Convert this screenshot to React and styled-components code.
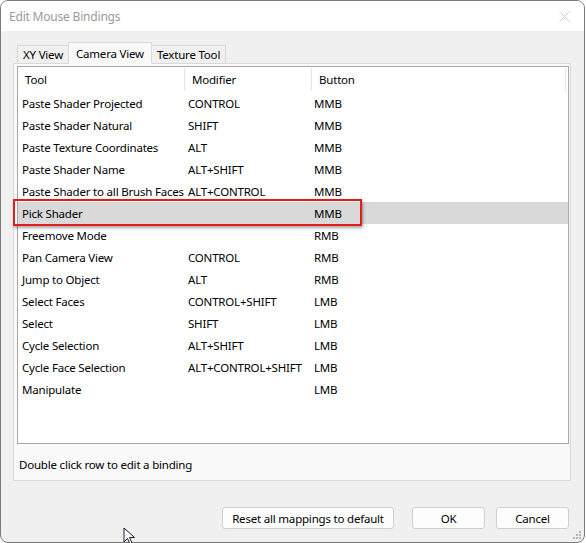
import React from 'react'
import styled, { createGlobalStyle } from 'styled-components'

const GlobalStyle = createGlobalStyle`
  html, body {
    margin: 0;
    padding: 0;
    background: #ffffff;
  }
  body {
    font-family: "Noto Sans", "Open Sans", sans-serif;
    font-size: 11.5px;
    letter-spacing: -0.2px;
    color: #000;
  }
`;

const Window = styled.div`
  position: relative;
  width: 585px;
  height: 543px;
  box-sizing: border-box;
  border: 1px solid #7a7a7a;
  border-radius: 8px;
  overflow: hidden;
  display: flex;
  flex-direction: column;
  background: #f0f0f0;
`;

const TitleBar = styled.div`
  height: 30px;
  flex-shrink: 0;
  background: #ffffff;
  display: flex;
  align-items: center;
  justify-content: space-between;
  padding: 0 8px;
`;

const Title = styled.span`
  color: #9b9b9b;
  font-size: 12px;
`;

const CloseBtn = styled.div`
  width: 20px;
  height: 20px;
  display: flex;
  align-items: center;
  justify-content: center;
  margin-right: 2px;
`;

const Client = styled.div`
  flex: 1;
  display: flex;
  flex-direction: column;
  padding: 11px 13px 0 12px;
`;

const TabStrip = styled.div`
  display: flex;
  align-items: flex-end;
  padding-left: 4px;
  height: 22px;
  position: relative;
  z-index: 1;
  margin-bottom: -1px;
`;

const Tab = styled.div`
  box-sizing: border-box;
  height: ${p => (p.$active ? '22px' : '19px')};
  padding: 0 ${p => (p.$active ? '7px' : '5px')};
  margin: ${p => (p.$active ? '0 -1px' : '0')};
  display: flex;
  align-items: center;
  background: ${p => (p.$active ? '#f9f9f9' : '#f0f0f0')};
  border: 1px solid #d9d9d9;
  border-bottom: ${p => (p.$active ? '1px solid #f9f9f9' : '1px solid #d9d9d9')};
  position: relative;
  z-index: ${p => (p.$active ? 2 : 1)};
  white-space: nowrap;
`;

const Pane = styled.div`
  box-sizing: border-box;
  height: 418px;
  background: #f9f9f9;
  border: 1px solid #d9d9d9;
  padding: 2px 1px 0 3px;
  display: flex;
  flex-direction: column;
`;

const List = styled.div`
  box-sizing: border-box;
  height: 378px;
  background: #ffffff;
  border: 1px solid #a8a8a8;
  display: flex;
  flex-direction: column;
`;

const Grid = styled.div`
  display: grid;
  grid-template-columns: 167px 127px 254px;
`;

const HeaderCell = styled.div`
  height: 23px;
  display: flex;
  align-items: center;
  padding-left: 7px;
  border-right: 1px solid #e5e5e5;
  margin: 1px 0 1px;
  white-space: nowrap;
`;

const Row = styled.div`
  position: relative;
  display: grid;
  grid-template-columns: 167px 127px 254px;
  height: 22px;
  align-items: center;
  background: ${p => (p.$selected ? '#d9d9d9' : 'transparent')};
`;

const Cell = styled.div`
  padding-left: ${p => p.$pad || 4}px;
  white-space: nowrap;
  overflow: hidden;
`;

const Highlight = styled.div`
  position: absolute;
  left: -5px;
  top: -3px;
  width: 349px;
  height: 27px;
  box-sizing: border-box;
  border: 2px solid #e41b1b;
  box-shadow: 1px 2px 3px rgba(0, 0, 0, 0.35);
  pointer-events: none;
`;

const Status = styled.div`
  flex: 1;
  display: flex;
  align-items: center;
  padding-left: 2px;
  padding-top: 4px;
`;

const ButtonBar = styled.div`
  display: flex;
  justify-content: flex-end;
  align-items: center;
  padding: 26px 2px 0 0;
`;

const Button = styled.div`
  box-sizing: border-box;
  height: 22px;
  width: ${p => p.$w}px;
  margin-left: ${p => p.$gap || 0}px;
  display: flex;
  align-items: center;
  justify-content: center;
  background: #fdfdfd;
  border: 1px solid #d0d0d0;
  border-radius: 3px;
  white-space: nowrap;
`;

const Grip = styled.svg`
  position: absolute;
  right: 2px;
  bottom: 2px;
`;

const Cursor = styled.svg`
  position: absolute;
  left: 123px;
  top: 527px;
`;

const bindings = [
  ['Paste Shader Projected', 'CONTROL', 'MMB'],
  ['Paste Shader Natural', 'SHIFT', 'MMB'],
  ['Paste Texture Coordinates', 'ALT', 'MMB'],
  ['Paste Shader Name', 'ALT+SHIFT', 'MMB'],
  ['Paste Shader to all Brush Faces', 'ALT+CONTROL', 'MMB'],
  ['Pick Shader', '', 'MMB'],
  ['Freemove Mode', '', 'RMB'],
  ['Pan Camera View', 'CONTROL', 'RMB'],
  ['Jump to Object', 'ALT', 'RMB'],
  ['Select Faces', 'CONTROL+SHIFT', 'LMB'],
  ['Select', 'SHIFT', 'LMB'],
  ['Cycle Selection', 'ALT+SHIFT', 'LMB'],
  ['Cycle Face Selection', 'ALT+CONTROL+SHIFT', 'LMB'],
  ['Manipulate', '', 'LMB'],
];

const App = () => {
  return (
    <>
      <GlobalStyle />
      <Window>
        <TitleBar>
          <Title>Edit Mouse Bindings</Title>
          <CloseBtn>
            <svg width="11" height="11" viewBox="0 0 11 11">
              <path d="M0.5 0.5 L10.5 10.5 M10.5 0.5 L0.5 10.5" stroke="#cfcfcf" strokeWidth="1" />
            </svg>
          </CloseBtn>
        </TitleBar>
        <Client>
          <TabStrip>
            <Tab>XY View</Tab>
            <Tab $active>Camera View</Tab>
            <Tab>Texture Tool</Tab>
          </TabStrip>
          <Pane>
            <List>
              <Grid>
                <HeaderCell>Tool</HeaderCell>
                <HeaderCell>Modifier</HeaderCell>
                <HeaderCell>Button</HeaderCell>
              </Grid>
              {bindings.map(([tool, mod, btn], i) => (
                <Row key={tool} $selected={i === 5}>
                  <Cell $pad={4}>{tool}</Cell>
                  <Cell $pad={3}>{mod}</Cell>
                  <Cell $pad={2}>{btn}</Cell>
                  {i === 5 && <Highlight />}
                </Row>
              ))}
            </List>
            <Status>Double click row to edit a binding</Status>
          </Pane>
          <ButtonBar>
            <Button $w={172}>Reset all mappings to default</Button>
            <Button $w={73} $gap={18}>OK</Button>
            <Button $w={73} $gap={11}>Cancel</Button>
          </ButtonBar>
        </Client>
        <Grip width="10" height="10" viewBox="0 0 10 10">
          <rect x="7" y="1" width="2" height="2" fill="#b5b5b5" />
          <rect x="4" y="4" width="2" height="2" fill="#b5b5b5" />
          <rect x="7" y="4" width="2" height="2" fill="#b5b5b5" />
          <rect x="1" y="7" width="2" height="2" fill="#b5b5b5" />
          <rect x="4" y="7" width="2" height="2" fill="#b5b5b5" />
          <rect x="7" y="7" width="2" height="2" fill="#b5b5b5" />
        </Grip>
      </Window>
      <Cursor width="13" height="18" viewBox="0 0 13 18">
        <path d="M1 1 L1 15 L4.5 11.5 L7 17 L9 16 L6.5 10.5 L11.5 10.5 Z" fill="#ffffff" stroke="#1a1a2a" strokeWidth="1" strokeLinejoin="miter" />
      </Cursor>
    </>
  )
}

export default App
